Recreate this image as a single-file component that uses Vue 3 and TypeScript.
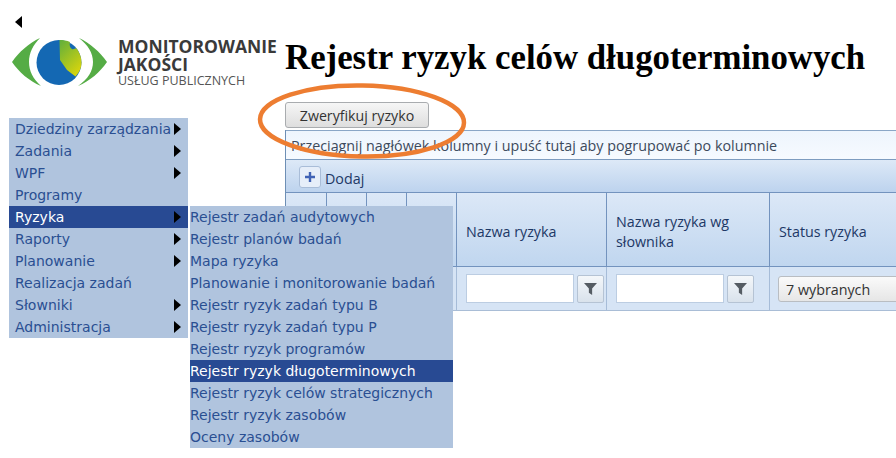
<script setup lang="ts">
interface Item { label: string; arrow?: boolean; active?: boolean }
const menu: Item[] = [
  { label: 'Dziedziny zarządzania', arrow: true },
  { label: 'Zadania', arrow: true },
  { label: 'WPF', arrow: true },
  { label: 'Programy' },
  { label: 'Ryzyka', arrow: true, active: true },
  { label: 'Raporty', arrow: true },
  { label: 'Planowanie', arrow: true },
  { label: 'Realizacja zadań' },
  { label: 'Słowniki', arrow: true },
  { label: 'Administracja', arrow: true },
]
const submenu: Item[] = [
  { label: 'Rejestr zadań audytowych' },
  { label: 'Rejestr planów badań' },
  { label: 'Mapa ryzyka' },
  { label: 'Planowanie i monitorowanie badań' },
  { label: 'Rejestr ryzyk zadań typu B' },
  { label: 'Rejestr ryzyk zadań typu P' },
  { label: 'Rejestr ryzyk programów' },
  { label: 'Rejestr ryzyk długoterminowych', active: true },
  { label: 'Rejestr ryzyk celów strategicznych' },
  { label: 'Rejestr ryzyk zasobów' },
  { label: 'Oceny zasobów' },
]
</script>

<template>
  <div class="page">
    <aside class="side">
      <svg class="back" width="8" height="12" viewBox="0 0 8 12"><path d="M7 0V12L0 6Z" fill="#000" /></svg>
      <div class="logo">
        <svg class="eye" width="96" height="52" viewBox="12 36 96 52">
          <defs>
            <linearGradient id="wedge" x1="0" y1="0" x2="0.6" y2="1">
              <stop offset="0" stop-color="#5fae3c" />
              <stop offset="1" stop-color="#d3d30f" />
            </linearGradient>
          </defs>
          <path d="M12 62C19 52 29 43 40 38C33 45 29 53 29 62C29 71 33 79 41 86C29 81 19 72 12 62Z" fill="#55ac45" />
          <path d="M107 62C100 52 90 43 79 38C88 45 93 53 93 62C93 71 88 79 78 86C90 81 100 72 107 62Z" fill="#55ac45" />
          <circle cx="59" cy="62.5" r="22.5" fill="#1468b3" />
          <path d="M59.5 40C63 40 67 40.500 70 42C69 45 70 48 72 49C74 50 76 47 77 49C80 53 81.500 58 81.500 63C81.500 68 79 73 75.500 76.500L67 70L60 60Z" fill="url(#wedge)" />
        </svg>
        <div class="brand">
          <span class="brand-strong">MONITOROWANIE</span>
          <span class="brand-strong">JAKOŚCI</span>
          <span class="brand-light">USŁUG PUBLICZNYCH</span>
        </div>
      </div>
      <nav class="menu">
        <div v-for="item in menu" :key="item.label" class="item" :class="{ active: item.active }">
          <span>{{ item.label }}</span>
          <svg v-if="item.arrow" class="arrow" width="7" height="12" viewBox="0 0 7 12"><path d="M0 0V12L7 6Z" fill="#000" /></svg>
        </div>
        <div class="submenu">
          <div v-for="item in submenu" :key="item.label" class="item sub" :class="{ active: item.active }">{{ item.label }}</div>
        </div>
      </nav>
    </aside>

    <main class="main">
      <h1>Rejestr ryzyk celów długoterminowych</h1>
      <button class="verify" type="button">Zweryfikuj ryzyko</button>
      <section class="grid">
        <div class="group">Przeciągnij nagłówek kolumny i upuść tutaj aby pogrupować po kolumnie</div>
        <div class="toolbar">
          <span class="plus">
            <svg width="12" height="12" viewBox="0 0 12 12"><path d="M6 1V11M1 6H11" stroke="#3f62b5" stroke-width="2.400" /></svg>
          </span>
          <span class="add-label">Dodaj</span>
        </div>
        <div class="cols head">
          <div class="cell" />
          <div class="cell" />
          <div class="cell" />
          <div class="cell" />
          <div class="cell">Nazwa ryzyka</div>
          <div class="cell">Nazwa ryzyka wg słownika</div>
          <div class="cell last">Status ryzyka</div>
        </div>
        <div class="cols filter">
          <div class="cell" />
          <div class="cell" />
          <div class="cell" />
          <div class="cell" />
          <div class="cell">
            <span class="input" />
            <span class="funnel"><svg width="13" height="12" viewBox="0 0 12 11"><path d="M0 0H12L7.500 5V11L4.500 9V5Z" fill="#555c63" /></svg></span>
          </div>
          <div class="cell">
            <span class="input" />
            <span class="funnel"><svg width="13" height="12" viewBox="0 0 12 11"><path d="M0 0H12L7.500 5V11L4.500 9V5Z" fill="#555c63" /></svg></span>
          </div>
          <div class="cell last"><span class="select">7 wybranych</span></div>
        </div>
      </section>
      <svg class="ring" width="216" height="84" viewBox="0 0 216 84">
        <ellipse cx="108" cy="42" rx="102" ry="35.500" transform="rotate(1 108 42)" fill="none" stroke="#ed7d31" stroke-width="4.500" />
      </svg>
    </main>
  </div>
</template>

<style>
html, body { margin: 0; background: #fff; overflow: hidden; }
</style>

<style scoped>
.page {
  display: flex;
  width: 896px;
  height: 458px;
  overflow: hidden;
  background: #fff;
}
.side {
  position: relative;
  z-index: 2;
  flex: 0 0 285px;
  box-sizing: border-box;
  padding-top: 16px;
}
.back {
  display: block;
  margin-left: 15px;
}
.logo {
  display: flex;
  align-items: flex-start;
  gap: 10px;
  margin: 8px 0 0 12px;
  height: 82px;
}
.eye { display: block; flex: none; }
.brand {
  display: flex;
  flex-direction: column;
  font-family: "Open Sans", sans-serif;
  color: #3a3a3a;
  white-space: nowrap;
  margin-top: 1px;
}
.brand-strong {
  font-size: 17.500px;
  font-weight: 700;
  line-height: 18px;
}
.brand-light {
  font-size: 12.500px;
  line-height: 16px;
  color: #555;
}
.menu {
  position: relative;
  width: 179px;
  margin-left: 9px;
  background: #b0c4de;
}
.item {
  display: flex;
  align-items: center;
  justify-content: space-between;
  box-sizing: border-box;
  height: 22px;
  padding: 0 7px 0 6px;
  font-family: "DejaVu Sans", sans-serif;
  font-size: 14px;
  color: #2a4f92;
  white-space: nowrap;
}
.item.active {
  background: #284a93;
  color: #fff;
}
.arrow { flex: none; }
.submenu {
  position: absolute;
  left: 181px;
  top: 88px;
  width: 263px;
  background: #b0c4de;
}
.item.sub { padding: 0; }
.main {
  position: relative;
  flex: 0 0 auto;
  width: 700px;
}
h1 {
  margin: 37px 0 0;
  font-family: "Liberation Serif", serif;
  font-size: 34.800px;
  font-weight: 700;
  line-height: 42px;
  color: #000;
  white-space: nowrap;
}
.verify {
  display: block;
  box-sizing: border-box;
  width: 144px;
  height: 26px;
  margin: 23px 0 0;
  padding: 1px 0 0;
  border: 1px solid #a9acaf;
  border-radius: 3px;
  background: linear-gradient(#f6f6f6, #dedede);
  font-family: "Open Sans", sans-serif;
  font-size: 14.200px;
  color: #333;
}
.grid {
  box-sizing: border-box;
  width: 700px;
  margin-top: 2px;
  border-left: 1px solid #6e8fb5;
  font-family: "Open Sans", sans-serif;
  font-size: 14.300px;
  color: #1d3866;
}
.group {
  box-sizing: border-box;
  height: 30px;
  padding-left: 5px;
  line-height: 29px;
  background: linear-gradient(#eef5fd, #f6faff);
  border-top: 1px solid #8aa6c6;
  border-bottom: 1px solid #7d9cc0;
  color: #3c4a5c;
  white-space: nowrap;
}
.toolbar {
  display: flex;
  align-items: center;
  gap: 4px;
  box-sizing: border-box;
  height: 33px;
  padding: 2px 0 0 13px;
  background: linear-gradient(#dde9f7, #bdd3ee);
  border-bottom: 1px solid #7393be;
}
.add-label { padding-top: 2px; }
.plus {
  display: flex;
  align-items: center;
  justify-content: center;
  box-sizing: border-box;
  width: 22px;
  height: 22px;
  border: 1px solid #a9bdd8;
  border-radius: 3px;
  background: #e6eef9;
}
.cols {
  display: grid;
  grid-template-columns: 41px 40px 40px 50px 150px 163px 1fr;
}
.head {
  height: 74px;
  background: linear-gradient(#dce8f7, #c0d6ef);
  border-bottom: 1px solid #7393be;
  box-sizing: border-box;
}
.head .cell {
  display: flex;
  align-items: center;
  box-sizing: border-box;
  padding: 5px 9px 0;
  border-right: 1px solid #7393be;
  line-height: 20px;
}
.filter {
  height: 44px;
  box-sizing: border-box;
  background: #d6e4f5;
  border-bottom: 1px solid #a9bdd6;
}
.filter .cell {
  display: flex;
  align-items: center;
  gap: 3px;
  box-sizing: border-box;
  padding: 0 9px;
  border-right: 1px solid #a6bcd8;
}
.cell.last { border-right: 0; }
.filter .cell.last { padding-left: 8px; }
.input {
  flex: none;
  box-sizing: border-box;
  width: 108px;
  height: 29px;
  background: #fff;
  border: 1px solid #bccde2;
}
.funnel {
  display: flex;
  align-items: center;
  justify-content: center;
  flex: none;
  box-sizing: border-box;
  width: 27px;
  height: 28px;
  border: 1px solid #b5c3d4;
  border-radius: 2px;
  background: linear-gradient(#f4f7fa, #d9e2ec);
}
.select {
  box-sizing: border-box;
  display: block;
  width: 160px;
  height: 26px;
  padding-left: 7px;
  line-height: 25px;
  border: 1px solid #b9bdc2;
  border-radius: 3px;
  background: linear-gradient(#fafafa, #e6e6e6);
  color: #333;
  white-space: nowrap;
}
.ring {
  position: absolute;
  left: -31px;
  top: 79px;
  pointer-events: none;
}
</style>
